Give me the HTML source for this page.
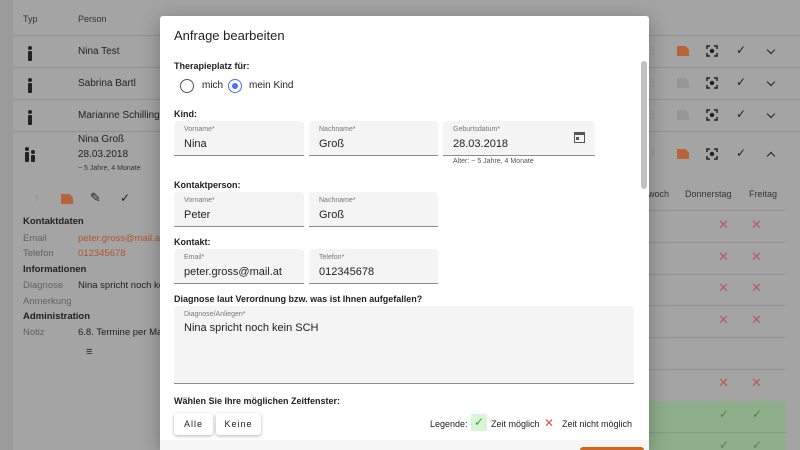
<!DOCTYPE html>
<html><head><meta charset="utf-8"><style>
*{box-sizing:border-box;margin:0;padding:0}
html,body{width:800px;height:450px;overflow:hidden}
body{background:#9b9b9b;font-family:"Liberation Sans",sans-serif;position:relative;color:#222}
.bg{position:absolute;left:13px;top:0;width:787px;height:450px;background:#a4a4a4}
.a{position:absolute;white-space:nowrap}
.line{position:absolute;height:1px;background:#929292}
.g{color:#626262}
.dlg{position:absolute;left:160px;top:16px;width:489px;height:434px;background:#fff;border-radius:3px 3px 0 0;box-shadow:0 4px 20px rgba(0,0,0,.3);overflow:hidden}
.lab{font-size:9px;font-weight:bold}
.f{position:absolute;background:#f4f4f4;border-bottom:1px solid #8c8c8c;border-radius:3px 3px 0 0;height:35px}
.f .l{position:absolute;left:10px;top:5px;font-size:7px;color:#777}
.f .v{position:absolute;left:10px;top:17px;font-size:11px;color:#222}
.x{color:#b85a56;font-size:13px}
.ck{color:#3f8f3f;font-size:12px}
.per{position:absolute;width:4px;height:10px;background:#222;border-radius:1px}
.per:before{content:"";position:absolute;left:0;top:-5px;width:4px;height:4px;border-radius:50%;background:#222}
.chev{position:absolute;width:6px;height:6px;border-right:1.5px solid #222;border-bottom:1.5px solid #222;transform:rotate(45deg)}
.doc{position:absolute;width:12px;height:10px;clip-path:polygon(0 0,70% 0,100% 35%,100% 100%,0 100%)}
.fc{position:absolute}
</style></head><body>
<div class="bg"></div>
<div class="a" style="left:23px;top:14px;font-size:9px;color:#333">Typ</div>
<div class="a" style="left:78px;top:14px;font-size:9px;color:#333">Person</div>
<div class="line" style="left:13px;top:35px;width:787px"></div>
<div class="line" style="left:13px;top:67px;width:787px"></div>
<div class="line" style="left:13px;top:99px;width:787px"></div>
<div class="line" style="left:13px;top:131px;width:787px"></div>
<div class="per" style="left:28px;top:51px"></div>
<div class="per" style="left:28px;top:83px"></div>
<div class="per" style="left:28px;top:115px"></div>
<div class="per" style="left:25px;top:152px"></div>
<div class="per" style="left:31px;top:155px;height:7px"></div>
<div class="a" style="left:78px;top:46px;font-size:10px">Nina Test</div>
<div class="a" style="left:78px;top:78px;font-size:10px">Sabrina Bartl</div>
<div class="a" style="left:78px;top:110px;font-size:10px">Marianne Schilling</div>
<div class="a" style="left:78px;top:134px;font-size:10px">Nina Groß</div>
<div class="a" style="left:78px;top:149px;font-size:10px">28.03.2018</div>
<div class="a" style="left:78px;top:165px;font-size:7px;color:#333">~ 5 Jahre, 4 Monate</div>
<div class="a" style="left:35px;top:192px;font-size:12px;color:#999;font-weight:bold">!</div>
<div class="doc" style="left:61px;top:194px;background:#b8643a"></div>
<div class="a" style="left:90px;top:190px;font-size:13px">✎</div>
<div class="a" style="left:120px;top:191px;font-size:12px">✓</div>
<div class="a" style="left:23px;top:216px;font-size:9.5px;font-weight:bold">Kontaktdaten</div>
<div class="a g" style="left:23px;top:233px;font-size:9.5px">Email</div>
<div class="a" style="left:78px;top:233px;font-size:9.5px;color:#b0552a">peter.gross@mail.at</div>
<div class="a g" style="left:23px;top:248px;font-size:9.5px">Telefon</div>
<div class="a" style="left:78px;top:248px;font-size:9.5px;color:#b0552a">012345678</div>
<div class="a" style="left:23px;top:264px;font-size:9.5px;font-weight:bold">Informationen</div>
<div class="a g" style="left:23px;top:280px;font-size:9.5px">Diagnose</div>
<div class="a" style="left:78px;top:280px;font-size:9.5px">Nina spricht noch kein</div>
<div class="a g" style="left:23px;top:296px;font-size:9.5px">Anmerkung</div>
<div class="a" style="left:23px;top:311px;font-size:9.5px;font-weight:bold">Administration</div>
<div class="a g" style="left:23px;top:327px;font-size:9.5px">Notiz</div>
<div class="a" style="left:78px;top:327px;font-size:9.5px">6.8. Termine per Mail</div>
<div class="a" style="left:86px;top:346px;font-size:11px">≡</div>

<div class="a" style="left:651px;top:44px;font-size:12px;color:#999;font-weight:bold">!</div>
<div class="a" style="left:651px;top:76px;font-size:12px;color:#999;font-weight:bold">!</div>
<div class="a" style="left:651px;top:108px;font-size:12px;color:#999;font-weight:bold">!</div>
<div class="a" style="left:651px;top:146px;font-size:12px;color:#999;font-weight:bold">!</div>
<div class="doc" style="left:677px;top:46px;background:#b8643a"></div>
<div class="doc" style="left:677px;top:78px;background:#969696"></div>
<div class="doc" style="left:677px;top:110px;background:#969696"></div>
<div class="doc" style="left:677px;top:149px;background:#b8643a"></div>
<svg class="fc" style="left:706px;top:45px" width="12" height="12" viewBox="0 0 12 12"><path d="M1 4V1H4M8 1H11V4M11 8V11H8M4 11H1V8" fill="none" stroke="#222" stroke-width="1.5"/><circle cx="6" cy="6" r="2.2" fill="#222"/></svg>
<svg class="fc" style="left:706px;top:77px" width="12" height="12" viewBox="0 0 12 12"><path d="M1 4V1H4M8 1H11V4M11 8V11H8M4 11H1V8" fill="none" stroke="#222" stroke-width="1.5"/><circle cx="6" cy="6" r="2.2" fill="#222"/></svg>
<svg class="fc" style="left:706px;top:109px" width="12" height="12" viewBox="0 0 12 12"><path d="M1 4V1H4M8 1H11V4M11 8V11H8M4 11H1V8" fill="none" stroke="#222" stroke-width="1.5"/><circle cx="6" cy="6" r="2.2" fill="#222"/></svg>
<svg class="fc" style="left:706px;top:148px" width="12" height="12" viewBox="0 0 12 12"><path d="M1 4V1H4M8 1H11V4M11 8V11H8M4 11H1V8" fill="none" stroke="#222" stroke-width="1.5"/><circle cx="6" cy="6" r="2.2" fill="#222"/></svg>
<div class="a" style="left:736px;top:43px;font-size:12px">✓</div>
<div class="a" style="left:736px;top:75px;font-size:12px">✓</div>
<div class="a" style="left:736px;top:107px;font-size:12px">✓</div>
<div class="a" style="left:736px;top:146px;font-size:12px">✓</div>
<div class="chev" style="left:768px;top:47px"></div>
<div class="chev" style="left:768px;top:79px"></div>
<div class="chev" style="left:768px;top:111px"></div>
<div class="chev" style="left:768px;top:153px;transform:rotate(225deg)"></div>
<div class="a" style="left:648px;top:189px;font-size:9px;color:#333">woch</div>
<div class="a" style="left:685px;top:189px;font-size:9px;color:#333">Donnerstag</div>
<div class="a" style="left:749px;top:189px;font-size:9px;color:#333">Freitag</div>
<div class="line" style="left:648px;top:210px;width:138px"></div>
<div class="line" style="left:648px;top:242px;width:138px"></div>
<div class="line" style="left:648px;top:274px;width:138px"></div>
<div class="line" style="left:648px;top:305px;width:138px"></div>
<div class="line" style="left:648px;top:337px;width:138px"></div>
<div class="line" style="left:648px;top:369px;width:138px"></div>
<div class="a" style="left:648px;top:401px;width:138px;height:49px;background:#8fae8b"></div>
<div class="line" style="left:648px;top:432px;width:138px;background:#80a07d"></div>
<div class="a x" style="left:718px;top:217px">✕</div><div class="a x" style="left:751px;top:217px">✕</div>
<div class="a x" style="left:718px;top:249px">✕</div><div class="a x" style="left:751px;top:249px">✕</div>
<div class="a x" style="left:718px;top:280px">✕</div><div class="a x" style="left:751px;top:280px">✕</div>
<div class="a x" style="left:718px;top:312px">✕</div><div class="a x" style="left:751px;top:312px">✕</div>
<div class="a x" style="left:718px;top:375px">✕</div><div class="a x" style="left:751px;top:375px">✕</div>
<div class="a ck" style="left:719px;top:407px">✓</div><div class="a ck" style="left:752px;top:407px">✓</div>
<div class="a ck" style="left:719px;top:438px">✓</div><div class="a ck" style="left:752px;top:438px">✓</div>

<div class="dlg">
<div class="a" style="left:14px;top:12px;font-size:13px">Anfrage bearbeiten</div>
<div class="a" style="left:481px;top:45px;width:6px;height:128px;background:#c1c1c1;border-radius:3px"></div>
<div class="a lab" style="left:14px;top:45px">Therapieplatz für:</div>
<div class="a" style="left:20px;top:63px;width:14px;height:14px;border:1.5px solid #555;border-radius:50%"></div>
<div class="a" style="left:42px;top:64px;font-size:10px">mich</div>
<div class="a" style="left:68px;top:63px;width:14px;height:14px;border:1.5px solid #4a6ef5;border-radius:50%"></div>
<div class="a" style="left:72px;top:67px;width:6px;height:6px;background:#4a6ef5;border-radius:50%"></div>
<div class="a" style="left:89px;top:64px;font-size:10px">mein Kind</div>
<div class="a lab" style="left:14px;top:93px">Kind:</div>
<div class="f" style="left:14px;top:105px;width:130px"><div class="l">Vorname*</div><div class="v">Nina</div></div>
<div class="f" style="left:149px;top:105px;width:129px"><div class="l">Nachname*</div><div class="v">Groß</div></div>
<div class="f" style="left:283px;top:105px;width:152px"><div class="l">Geburtsdatum*</div><div class="v">28.03.2018</div>
<div style="position:absolute;left:131px;top:11px;width:11px;height:11px;border:1.5px solid #555;border-top-width:3px"><div style="position:absolute;left:1px;top:2px;width:3px;height:3px;background:#555"></div></div></div>
<div class="a" style="left:293px;top:142px;font-size:7px;color:#555">Alter: ~ 5 Jahre, 4 Monate</div>
<div class="a lab" style="left:14px;top:164px">Kontaktperson:</div>
<div class="f" style="left:14px;top:176px;width:130px"><div class="l">Vorname*</div><div class="v">Peter</div></div>
<div class="f" style="left:149px;top:176px;width:129px"><div class="l">Nachname*</div><div class="v">Groß</div></div>
<div class="a lab" style="left:14px;top:221px">Kontakt:</div>
<div class="f" style="left:14px;top:233px;width:130px"><div class="l">Email*</div><div class="v">peter.gross@mail.at</div></div>
<div class="f" style="left:149px;top:233px;width:129px"><div class="l">Telefon*</div><div class="v">012345678</div></div>
<div class="a lab" style="left:14px;top:278px">Diagnose laut Verordnung bzw. was ist Ihnen aufgefallen?</div>
<div class="f" style="left:14px;top:290px;width:460px;height:78px"><div class="l">Diagnose/Anliegen*</div><div class="v" style="top:16px">Nina spricht noch kein SCH</div></div>
<div class="a lab" style="left:14px;top:380px">Wählen Sie Ihre möglichen Zeitfenster:</div>
<div class="a" style="left:14px;top:397px;width:39px;height:22px;box-shadow:0 1px 3px rgba(0,0,0,.3);border-radius:3px;font-size:9px;text-align:center;line-height:22px;letter-spacing:1px">Alle</div>
<div class="a" style="left:56px;top:397px;width:45px;height:22px;box-shadow:0 1px 3px rgba(0,0,0,.3);border-radius:3px;font-size:9px;text-align:center;line-height:22px;letter-spacing:1px">Keine</div>
<div class="a" style="left:270px;top:403px;font-size:9px;line-height:11px">Legende:</div>
<div class="a" style="left:311px;top:398px;width:16px;height:17px;background:#d8f5d8;color:#3f9f3f;font-size:12px;text-align:center;line-height:17px">✓</div>
<div class="a" style="left:331px;top:403px;font-size:9px;line-height:11px">Zeit möglich</div>
<div class="a" style="left:384px;top:401px;font-size:12px;color:#e05050;line-height:13px">✕</div>
<div class="a" style="left:402px;top:403px;font-size:9px;line-height:11px">Zeit nicht möglich</div>
<div class="a" style="left:0;top:424px;width:489px;height:20px;background:#f5f5f5"></div>
<div class="a" style="left:420px;top:431px;width:64px;height:12px;background:#d0661e;border-radius:3px"></div>
</div>
</body></html>
